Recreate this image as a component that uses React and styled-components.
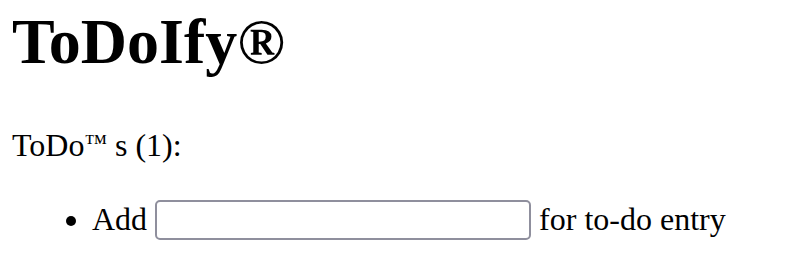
import React from 'react';
import styled, { createGlobalStyle } from 'styled-components';

const Global = createGlobalStyle`
  html, body {
    margin: 0;
    padding: 0;
    background: #fff;
  }
  body {
    font-family: "Liberation Serif", "Times New Roman", serif;
    color: #000;
  }
`

const Page = styled.div`
  padding: 0 0 0 12px;
`

const Title = styled.h1`
  margin: 5px 0 0;
  font-size: 64px;
  font-weight: 900;
  font-family: "Liberation Serif", "Times New Roman", serif;
`

const Count = styled.p`
  margin: 48px 0 0;
  font-size: 32px;
`

const Mark = styled.span`
  font-size: 0.72em;
  vertical-align: 0.28em;
`

const List = styled.ul`
  margin: 36px 0 0;
  padding-left: 80px;
  font-size: 32px;
`

const Entry = styled.input`
  box-sizing: border-box;
  width: 376px;
  height: 40px;
  margin: 0 0 6px;
  border: 2px solid #8f8f9d;
  border-radius: 5px;
  padding: 0 8px;
  font-size: 20px;
  vertical-align: middle;
  outline: none;
`

const App = () => {
  return (
    <Page>
      <Global />
      <Title>ToDoIfy®</Title>
      <Count>ToDo<Mark>™</Mark> s (1):</Count>
      <List>
        <li>
          Add <Entry type="text" /> for to-do entry
        </li>
      </List>
    </Page>
  )
}

export default App;
